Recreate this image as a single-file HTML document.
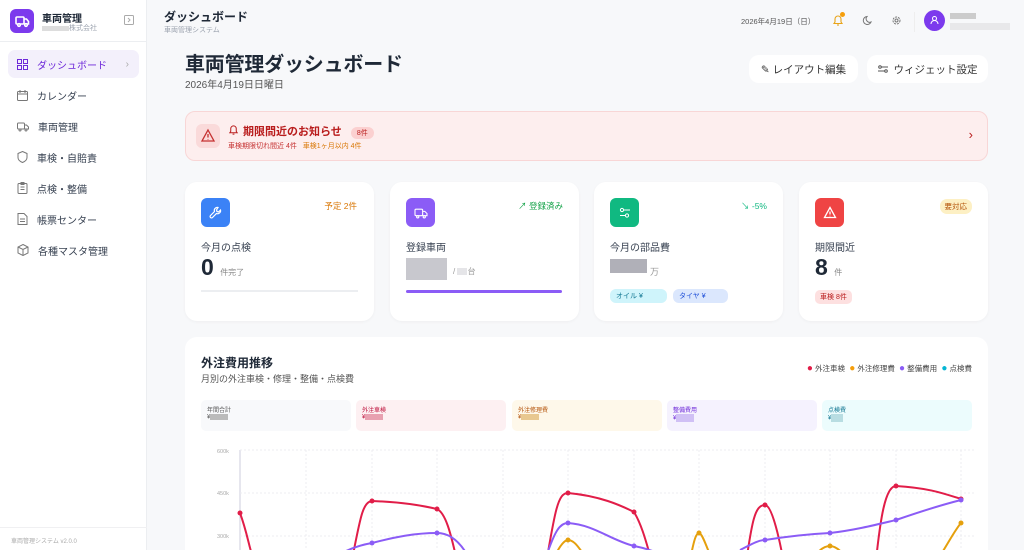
<!DOCTYPE html>
<html style="width:1024px;height:550px;overflow:hidden"><head><meta charset="utf-8"><style>
*{box-sizing:border-box;margin:0;padding:0}
body{width:1024px;height:550px;overflow:hidden;font-family:"Liberation Sans","Noto Sans CJK JP",sans-serif;background:#f7f8fa;color:#1f2937;position:relative}
.sb{position:absolute;left:0;top:0;width:147px;height:550px;background:#fff;border-right:1px solid #eceef1}
.logo{position:absolute;left:10px;top:9px;width:24px;height:24px;border-radius:6px;background:#7c3aed}
.nav{position:absolute;left:8px;width:131px;height:28px;border-radius:7px;font-size:10px;color:#374151;display:flex;align-items:center;padding-left:9px}
.nav svg{margin-right:9px}
.nav.act{background:#f3f0fb;color:#6d28d9}
.blur{display:inline-block;background:#d6d6da;vertical-align:middle}
.card{position:absolute;top:182px;width:189px;height:139px;background:#fff;border-radius:12px;box-shadow:0 1px 3px rgba(0,0,0,.04)}
.ic{position:absolute;left:16px;top:16px;width:29px;height:29px;border-radius:6px;display:flex;align-items:center;justify-content:center}
.lab{position:absolute;left:16px;top:57px;font-size:10px;color:#374151}
.sumb{position:absolute;top:400px;width:150px;height:31px;border-radius:5px;font-size:6px;padding:5px 6px}
</style></head><body>
<div class="sb">
 <div class="logo"><svg width="24" height="24" viewBox="0 0 24 24" fill="none" stroke="#fff" stroke-width="1.6"><rect x="6" y="8" width="8" height="7" rx="1"/><path d="M14 10h2.5l2 2.5V15H14"/><circle cx="9" cy="16" r="1.3" fill="#7c3aed"/><circle cx="16" cy="16" r="1.3" fill="#7c3aed"/></svg></div>
 <div style="position:absolute;left:42px;top:10px;font-size:10px;font-weight:bold">車両管理</div>
 <div style="position:absolute;left:42px;top:23px;font-size:7px;color:#9ca3af"><span class="blur" style="width:27px;height:5px;background:#ddd"></span>株式会社</div>
 <svg style="position:absolute;left:124px;top:15px" width="10" height="10" viewBox="0 0 10 10" fill="none" stroke="#aaa"><rect x=".5" y=".5" width="9" height="9" rx="1"/><path d="M4 3l2 2-2 2"/></svg>
 <div style="position:absolute;left:0;top:41px;width:147px;border-top:1px solid #eceef1"></div>
 <div class="nav act" style="top:50px"><svg width="11" height="11" viewBox="0 0 11 11" fill="none" stroke="#6d28d9"><rect x=".5" y=".5" width="4" height="4"/><rect x="6.5" y=".5" width="4" height="4"/><rect x=".5" y="6.5" width="4" height="4"/><rect x="6.5" y="6.5" width="4" height="4"/></svg>ダッシュボード<span style="position:absolute;right:10px;color:#aaa">›</span></div>
 <div class="nav" style="top:81px"><svg width="11" height="11" viewBox="0 0 11 11" fill="none" stroke="#777"><rect x=".5" y="1.5" width="10" height="9" rx="1"/><path d="M.5 4h10M3 0v3M8 0v3"/></svg>カレンダー</div>
 <div class="nav" style="top:112px"><svg width="12" height="11" viewBox="0 0 12 11" fill="none" stroke="#777"><rect x=".5" y="2" width="7" height="6" rx="1"/><path d="M7.5 4h2l2 2v2h-4"/><circle cx="3" cy="9" r="1"/><circle cx="9" cy="9" r="1"/></svg>車両管理</div>
 <div class="nav" style="top:143px"><svg width="11" height="12" viewBox="0 0 11 12" fill="none" stroke="#777"><path d="M5.5 .5L10 2.5v4c0 2.5-2 4-4.5 5C3 10.5 1 9 1 6.5v-4z"/></svg>車検・自賠責</div>
 <div class="nav" style="top:174px"><svg width="11" height="12" viewBox="0 0 11 12" fill="none" stroke="#777"><rect x="1" y="1.5" width="9" height="10" rx="1"/><path d="M3.5 5h4M3.5 7.5h4M4 .5h3v2H4z"/></svg>点検・整備</div>
 <div class="nav" style="top:205px"><svg width="11" height="12" viewBox="0 0 11 12" fill="none" stroke="#777"><path d="M1 .5h6l3 3v8H1z"/><path d="M3 6h5M3 8.5h5"/></svg>帳票センター</div>
 <div class="nav" style="top:236px"><svg width="12" height="12" viewBox="0 0 12 12" fill="none" stroke="#777"><path d="M6 .5l5 2.5v6L6 11.5 1 9V3z"/><path d="M1 3l5 2.5L11 3M6 5.5v6"/></svg>各種マスタ管理</div>
 <div style="position:absolute;left:0;top:527px;width:147px;border-top:1px solid #f0f0f2"></div>
 <div style="position:absolute;left:11px;top:536px;font-size:6px;color:#aaa">車両管理システム v2.0.0</div>
</div>

<div style="position:absolute;left:164px;top:8px;font-size:12px;font-weight:bold">ダッシュボード</div>
<div style="position:absolute;left:164px;top:25px;font-size:7px;color:#9ca3af">車両管理システム</div>
<div style="position:absolute;left:741px;top:16px;font-size:7.5px;color:#555">2026年4月19日（日）</div>
<svg style="position:absolute;left:832px;top:14px" width="12" height="13" viewBox="0 0 12 13" fill="none" stroke="#e8a317" stroke-width="1.1"><path d="M2 9.5h8L9 8V5a3 3 0 0 0-6 0v3z"/><path d="M5 11h2"/></svg>
<div style="position:absolute;left:840px;top:12px;width:5px;height:5px;border-radius:50%;background:#f59e0b"></div>
<svg style="position:absolute;left:862px;top:15px" width="11" height="11" viewBox="0 0 11 11" fill="none" stroke="#777"><path d="M9 7A4 4 0 1 1 5 1.5 3.5 3.5 0 0 0 9 7z"/></svg>
<svg style="position:absolute;left:891px;top:15px" width="11" height="11" viewBox="0 0 11 11" fill="none" stroke="#777"><circle cx="5.5" cy="5.5" r="3.5" stroke-dasharray="2 1"/><circle cx="5.5" cy="5.5" r="1.5"/></svg>
<div style="position:absolute;left:914px;top:12px;height:20px;border-left:1px solid #eee"></div>
<div style="position:absolute;left:924px;top:10px;width:21px;height:21px;border-radius:50%;background:#7c3aed"><svg width="21" height="21" viewBox="0 0 21 21" fill="none" stroke="#fff"><circle cx="10.5" cy="8.5" r="2"/><path d="M7 14a3.5 3.5 0 0 1 7 0"/></svg></div>
<div class="blur" style="position:absolute;left:950px;top:13px;width:26px;height:6px;background:#ccc"></div>
<div class="blur" style="position:absolute;left:950px;top:23px;width:60px;height:7px;background:#e8e8ea"></div>

<div style="position:absolute;left:185px;top:48px;font-size:20px;font-weight:bold;color:#1f2937;letter-spacing:-.2px">車両管理ダッシュボード</div>
<div style="position:absolute;left:185px;top:76px;font-size:10px;color:#555">2026年4月19日日曜日</div>
<div style="position:absolute;left:749px;top:55px;width:109px;height:28px;background:#fff;border-radius:10px;font-size:10.5px;color:#333;display:flex;align-items:center;justify-content:center">✎&nbsp;レイアウト編集</div>
<div style="position:absolute;left:867px;top:55px;width:121px;height:28px;background:#fff;border-radius:10px;font-size:10.5px;color:#333;display:flex;align-items:center;justify-content:center"><svg width="10" height="10" viewBox="0 0 10 10" fill="none" stroke="#555" style="margin-right:6px"><circle cx="2" cy="3" r="1.3"/><circle cx="8" cy="7" r="1.3"/><path d="M3.3 3H10M0 7h6.7"/></svg>ウィジェット設定</div>

<div style="position:absolute;left:185px;top:111px;width:803px;height:50px;background:#fdeeee;border:1px solid #f8d6d6;border-radius:10px">
 <div style="position:absolute;left:10px;top:12px;width:24px;height:24px;border-radius:6px;background:#fadada"><svg width="24" height="24" viewBox="0 0 24 24" fill="none" stroke="#c53030" stroke-width="1.3"><path d="M12 6l6 11H6z"/><path d="M12 10v3.5M12 15v.5"/></svg></div>
 <svg style="position:absolute;left:42px;top:12px" width="11" height="12" viewBox="0 0 12 13" fill="none" stroke="#b91c1c" stroke-width="1.1"><path d="M2 9.5h8L9 8V5a3 3 0 0 0-6 0v3z"/><path d="M5 11h2"/></svg>
 <div style="position:absolute;left:57px;top:11px;font-size:11px;font-weight:bold;color:#b91c1c">期限間近のお知らせ <span style="display:inline-block;font-size:7px;background:#fbd0d0;border-radius:8px;padding:1px 6px;margin-left:6px;font-weight:normal">8件</span></div>
 <div style="position:absolute;left:42px;top:29px;font-size:7px;color:#c53030">車検期限切れ間近 4件 <span style="color:#d97706;margin-left:4px">車検1ヶ月以内 4件</span></div>
 <div style="position:absolute;right:14px;top:15px;font-size:13px;color:#b91c1c">›</div>
</div>

<div class="card" style="left:185px">
 <div class="ic" style="background:#3b82f6"><svg width="14" height="14" viewBox="0 0 14 14" fill="none" stroke="#fff" stroke-width="1.2"><path d="M9 1.5a3 3 0 0 0-3.5 4L1.5 9.5a1.4 1.4 0 0 0 2 2l4-4a3 3 0 0 0 4-3.5L9.5 6 8 5.5 7.5 4z"/></svg></div>
 <div style="position:absolute;right:17px;top:18px;font-size:8.5px;color:#d97706">予定 2件</div>
 <div class="lab">今月の点検</div>
 <div style="position:absolute;left:16px;top:72px;font-size:23px;font-weight:bold">0 <span style="font-size:8px;font-weight:normal;color:#888">件完了</span></div>
 <div style="position:absolute;left:16px;top:108px;width:157px;height:2px;background:#eceef1"></div>
</div>
<div class="card" style="left:390px">
 <div class="ic" style="background:#8b5cf6"><svg width="14" height="12" viewBox="0 0 12 11" fill="none" stroke="#fff"><rect x=".5" y="2" width="7" height="6" rx="1"/><path d="M7.5 4h2l2 2v2h-4"/><circle cx="3" cy="9" r="1"/><circle cx="9" cy="9" r="1"/></svg></div>
 <div style="position:absolute;right:16px;top:18px;font-size:8.5px;color:#16a34a">↗ 登録済み</div>
 <div class="lab">登録車両</div>
 <div class="blur" style="position:absolute;left:16px;top:76px;width:41px;height:22px;background:#c8c8ce"></div>
 <div style="position:absolute;left:63px;top:84px;font-size:8px;color:#999">/ <span class="blur" style="width:10px;height:7px;background:#e5e5e8"></span>台</div>
 <div style="position:absolute;left:16px;top:108px;width:156px;height:3px;border-radius:2px;background:#8b5cf6"></div>
</div>
<div class="card" style="left:594px">
 <div class="ic" style="background:#10b981"><svg width="12" height="12" viewBox="0 0 12 12" fill="none" stroke="#fff"><circle cx="3" cy="3" r="1.6"/><circle cx="8" cy="8.5" r="1.6"/><path d="M4.6 3H11M1 8.5h5.4"/></svg></div>
 <div style="position:absolute;right:16px;top:18px;font-size:8.5px;color:#10b981">↘ -5%</div>
 <div class="lab">今月の部品費</div>
 <div class="blur" style="position:absolute;left:16px;top:77px;width:37px;height:14px;background:#b0b0b8"></div>
 <div style="position:absolute;left:56px;top:83px;font-size:9px;color:#999">万</div>
 <div style="position:absolute;left:16px;top:107px;width:57px;height:14px;border-radius:6px;background:#cff4fb;font-size:7px;color:#0e7490;padding:2px 6px">オイル ¥</div>
 <div style="position:absolute;left:79px;top:107px;width:55px;height:14px;border-radius:6px;background:#dbe7fd;font-size:7px;color:#1d4ed8;padding:2px 6px">タイヤ ¥</div>
</div>
<div class="card" style="left:799px">
 <div class="ic" style="background:#ef4444"><svg width="14" height="14" viewBox="0 0 14 14" fill="none" stroke="#fff" stroke-width="1.3"><path d="M7 1.5l5.5 10h-11z"/><path d="M7 5.5v3M7 9.8v.4"/></svg></div>
 <div style="position:absolute;right:16px;top:17px;font-size:7.5px;color:#b45309;background:#fdf0c4;border-radius:7px;padding:2px 5px">要対応</div>
 <div class="lab">期限間近</div>
 <div style="position:absolute;left:16px;top:72px;font-size:23px;font-weight:bold">8 <span style="font-size:8px;font-weight:normal;color:#888">件</span></div>
 <div style="position:absolute;left:16px;top:108px;font-size:7px;color:#b91c1c;background:#fde0e0;border-radius:5px;padding:2px 5px">車検 8件</div>
</div>

<div style="position:absolute;left:185px;top:337px;width:803px;height:213px;background:#fff;border-radius:12px 12px 0 0">
 <div style="position:absolute;left:16px;top:17px;font-size:12px;font-weight:bold">外注費用推移</div>
 <div style="position:absolute;left:16px;top:35px;font-size:9px;color:#555">月別の外注車検・修理・整備・点検費</div>
 <div style="position:absolute;right:16px;top:26px;font-size:7.5px;color:#444;white-space:nowrap">
  <span style="color:#e11d48;font-size:10px">●</span> 外注車検&nbsp;&nbsp;<span style="color:#f59e0b;font-size:10px">●</span> 外注修理費&nbsp;&nbsp;<span style="color:#8b5cf6;font-size:10px">●</span> 整備費用&nbsp;&nbsp;<span style="color:#06b6d4;font-size:10px">●</span> 点検費</div>
</div>
<div class="sumb" style="left:201px;background:#f8f9fb;color:#555">年間合計<br>¥<span class="blur" style="width:18px;height:6px;background:#bbb"></span></div>
<div class="sumb" style="left:356px;background:#fdf0f2;color:#be123c">外注車検<br>¥<span class="blur" style="width:18px;height:6px;background:#e8a0b0"></span></div>
<div class="sumb" style="left:512px;background:#fef8ea;color:#b45309">外注修理費<br>¥<span class="blur" style="width:18px;height:6px;background:#e8c890"></span></div>
<div class="sumb" style="left:667px;background:#f5f2fe;color:#6d28d9">整備費用<br>¥<span class="blur" style="width:18px;height:8px;background:#d0c0f5"></span></div>
<div class="sumb" style="left:822px;background:#ecfcfd;color:#0e7490">点検費<br>¥<span class="blur" style="width:12px;height:8px;background:#b8dde2"></span></div>

<svg style="position:absolute;left:0;top:0" width="1024" height="550">
 <g font-size="5.5" fill="#aaa" font-family="Liberation Sans">
  <text x="217" y="453">600k</text><text x="217" y="495">450k</text><text x="217" y="538">300k</text></g>
 <path d="M240 450V550" stroke="#ccd" />
 <g stroke="#ececf0" stroke-dasharray="2 2"><path d="M240 450H975M240 493H975M240 536H975"/>
 <path d="M306 450V550M372 450V550M437 450V550M503 450V550M568 450V550M634 450V550M699 450V550M765 450V550M830 450V550M896 450V550M961 450V550"/></g>
 <g fill="none" stroke-width="2">
  <path stroke="#e11d48" d="M240 513C250 540 250 560 260 570M350 570C360 520 362 502 372 501C400 502 420 505 437 509C450 515 455 560 460 570M545 570C555 510 558 493 568 493C600 496 620 505 634 512C645 530 650 560 655 570M745 570C752 520 755 505 765 505C772 505 780 540 785 570M875 570C880 520 885 486 896 486C930 488 945 494 961 499"/>
  <path stroke="#8b5cf6" d="M330 560C345 550 360 545 372 543C395 537 415 533 437 533C455 533 465 550 470 560M545 560C555 530 560 523 568 523C595 525 610 540 634 546C645 548 650 550 655 552M740 550C750 545 758 540 765 540C790 536 810 534 830 533C855 530 875 525 896 520C925 510 945 504 961 500"/>
  <path stroke="#e5a00d" d="M555 556C560 545 565 540 568 540C575 540 580 550 585 556M690 560C694 540 696 533 699 533C702 533 706 545 712 560M815 556C820 549 825 546 830 546C835 546 840 550 845 556M940 556C950 540 955 530 961 523"/>
 </g>
 <g fill="#e11d48"><circle cx="240" cy="513" r="2.5"/><circle cx="372" cy="501" r="2.5"/><circle cx="437" cy="509" r="2.5"/><circle cx="568" cy="493" r="2.5"/><circle cx="634" cy="512" r="2.5"/><circle cx="765" cy="505" r="2.5"/><circle cx="896" cy="486" r="2.5"/><circle cx="961" cy="499" r="2.5"/></g>
 <g fill="#8b5cf6"><circle cx="372" cy="543" r="2.5"/><circle cx="437" cy="533" r="2.5"/><circle cx="568" cy="523" r="2.5"/><circle cx="634" cy="546" r="2.5"/><circle cx="765" cy="540" r="2.5"/><circle cx="830" cy="533" r="2.5"/><circle cx="896" cy="520" r="2.5"/><circle cx="961" cy="500" r="2.5"/></g>
 <g fill="#e5a00d"><circle cx="568" cy="540" r="2.5"/><circle cx="699" cy="533" r="2.5"/><circle cx="830" cy="546" r="2.5"/><circle cx="961" cy="523" r="2.5"/></g>
</svg>
</body></html>
